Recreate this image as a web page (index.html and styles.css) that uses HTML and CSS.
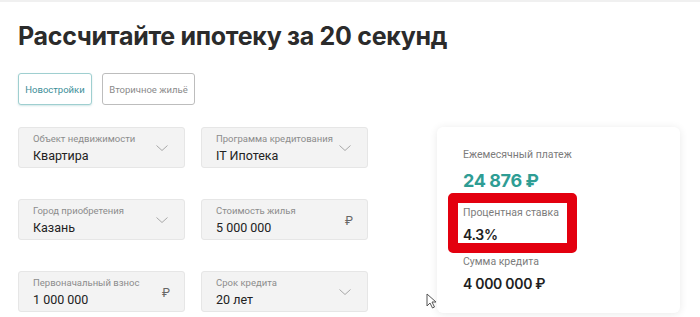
FILE: index.html
```html
<!DOCTYPE html>
<html lang="ru">
<head>
<meta charset="utf-8">
<link rel="stylesheet" href="styles.css">
</head>
<body>
<div class="page">
  <h1 class="title">Рассчитайте ипотеку за 20 секунд</h1>
  <div class="tabs">
    <button class="tab active">Новостройки</button>
    <button class="tab">Вторичное жильё</button>
  </div>
  <div class="main">
    <div class="form">
      <div class="field">
        <div class="texts"><div class="label">Объект недвижимости</div><div class="value">Квартира</div></div>
        <svg class="chev" width="12" height="6" viewBox="0 0 12 6"><path d="M0.5 0.5 L6 5.5 L11.5 0.5" fill="none" stroke="#a8a8a8" stroke-width="1"/></svg>
      </div>
      <div class="field">
        <div class="texts"><div class="label">Программа кредитования</div><div class="value">IT Ипотека</div></div>
        <svg class="chev" width="12" height="6" viewBox="0 0 12 6"><path d="M0.5 0.5 L6 5.5 L11.5 0.5" fill="none" stroke="#a8a8a8" stroke-width="1"/></svg>
      </div>
      <div class="field">
        <div class="texts"><div class="label">Город приобретения</div><div class="value">Казань</div></div>
        <svg class="chev" width="12" height="6" viewBox="0 0 12 6"><path d="M0.5 0.5 L6 5.5 L11.5 0.5" fill="none" stroke="#a8a8a8" stroke-width="1"/></svg>
      </div>
      <div class="field">
        <div class="texts"><div class="label">Стоимость жилья</div><div class="value num">5 000 000</div></div>
        <span class="rub">₽</span>
      </div>
      <div class="field">
        <div class="texts"><div class="label">Первоначальный взнос</div><div class="value num">1 000 000</div></div>
        <span class="rub">₽</span>
      </div>
      <div class="field">
        <div class="texts"><div class="label">Срок кредита</div><div class="value num">20 лет</div></div>
        <svg class="chev" width="12" height="6" viewBox="0 0 12 6"><path d="M0.5 0.5 L6 5.5 L11.5 0.5" fill="none" stroke="#a8a8a8" stroke-width="1"/></svg>
      </div>
    </div>
    <div class="card">
      <div class="item">
        <div class="clabel">Ежемесячный платеж</div>
        <div class="cvalue big">24 876 ₽</div>
      </div>
      <div class="item marked">
        <div class="clabel">Процентная ставка</div>
        <div class="cvalue">4.3%</div>
      </div>
      <div class="item">
        <div class="clabel">Сумма кредита</div>
        <div class="cvalue">4 000 000 ₽</div>
      </div>
    </div>
  </div>
  <svg class="cursor" width="12" height="17" viewBox="0 0 12 17"><path d="M1 1 L1 13 L4 10 L6.5 15 L8.5 14 L6 9 L10 9 Z" fill="#fff" stroke="#555" stroke-width="1" stroke-linejoin="round"/></svg>
</div>
</body>
</html>
```
FILE: styles.css
```css
html, body {
  margin: 0;
  padding: 0;
  background: #fff;
}
.page {
  position: relative;
  width: 700px;
  height: 317px;
  overflow: hidden;
  padding-left: 18px;
  box-sizing: border-box;
  border-top: 2px solid #f0f0f0;
  font-family: Roboto, "Liberation Sans", Arial, sans-serif;
}
.title {
  margin: 18px 0 0 0;
  font-family: Inter, "Noto Sans", sans-serif;
  font-weight: 700;
  font-size: 25px;
  line-height: 32px;
  color: #2b2b2b;
  letter-spacing: -0.3px;
}
.tabs {
  display: flex;
  gap: 10px;
  margin-top: 21px;
}
.tab {
  height: 32px;
  box-sizing: border-box;
  border: 1px solid #bdbdbd;
  border-radius: 3px;
  background: #fff;
  font-family: Roboto, "Liberation Sans", Arial, sans-serif;
  font-size: 9.5px;
  color: #8a8a8a;
  padding: 0;
  width: 93px;
}
.tab.active {
  width: 74px;
  border-color: #9fcfd0;
  color: #3c8e98;
  box-shadow: 0 1px 2px rgba(80, 160, 165, 0.25);
}
.main {
  display: flex;
  align-items: flex-start;
  margin-top: 22px;
  gap: 69px;
}
.form {
  display: grid;
  grid-template-columns: 167px 167px;
  grid-auto-rows: 41px;
  column-gap: 16px;
  row-gap: 31px;
}
.field {
  display: flex;
  align-items: center;
  justify-content: space-between;
  box-sizing: border-box;
  background: #f3f3f3;
  border: 1px solid #e6e6e6;
  border-radius: 3px;
  padding: 0 16px 0 14px;
}
.texts {
  display: flex;
  flex-direction: column;
  padding-top: 1px;
}
.label {
  font-size: 9.5px;
  line-height: 12px;
  color: #8c8c8c;
}
.value {
  font-size: 12.5px;
  line-height: 17px;
  color: #222;
  margin-top: 2px;
}
.chev {
  display: block;
}
.rub {
  font-size: 12px;
  line-height: 14px;
  color: #666;
  margin-top: 2px;
  margin-right: -2px;
}
.card {
  width: 243px;
  height: 186px;
  box-sizing: border-box;
  background: #fff;
  border-radius: 6px;
  box-shadow: 0 1px 8px rgba(0, 0, 0, 0.09);
  padding: 21px 0 0 26px;
}
.item {
  display: flex;
  flex-direction: column;
}
.clabel {
  font-size: 10.5px;
  line-height: 14px;
  color: #7c7c7c;
}
.cvalue {
  font-family: Inter, "Noto Sans", sans-serif;
  font-weight: 600;
  font-size: 14px;
  line-height: 18px;
  color: #1e1e1e;
  letter-spacing: -0.3px;
  margin-top: 5px;
}
.cvalue.big {
  font-size: 18px;
  line-height: 22px;
  color: #2e9d94;
  font-weight: 700;
  letter-spacing: -0.4px;
  margin-top: 8px;
}
.marked {
  width: 129px;
  height: 60px;
  box-sizing: border-box;
  margin: 1px 0 0 -15px;
  padding: 3px 0 0 5px;
  border: 10px solid #e3000f;
  border-radius: 5px;
}
.marked .cvalue {
  margin-top: 6px;
}
.item:last-child .cvalue {
  margin-top: 6px;
}
.item:last-child {
  margin-top: 2px;
}
.cursor {
  position: absolute;
  left: 426px;
  top: 291px;
}
```
